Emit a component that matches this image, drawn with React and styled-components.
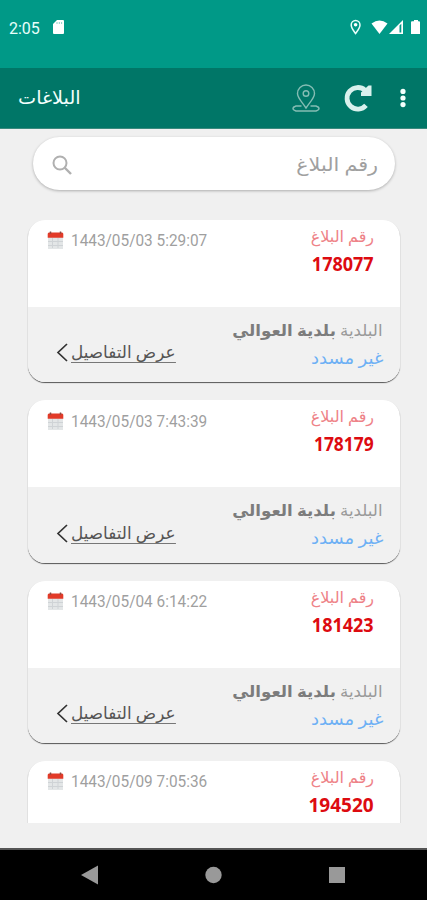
import React from 'react';
import styled, { createGlobalStyle } from 'styled-components';

const GlobalStyle = createGlobalStyle`
  * {
    box-sizing: border-box;
  }
  body {
    margin: 0;
    background: #f0f0f0;
    font-family: Roboto, 'DejaVu Sans', sans-serif;
  }
`;

const Screen = styled.div`
  width: 427px;
  height: 900px;
  display: flex;
  flex-direction: column;
  overflow: hidden;
  background: #f0f0f0;
`;

const StatusBar = styled.div`
  height: 68px;
  flex: none;
  display: flex;
  align-items: flex-start;
  padding: 19px 7px 0 9px;
  background: #009987;
  color: #e8fffb;
`;

const Clock = styled.span`
  font-size: 16px;
  line-height: 19px;
  width: 43px;
`;

const StatusIcons = styled.div`
  display: flex;
  margin-left: auto;
`;

const Toolbar = styled.div`
  height: 61px;
  flex: none;
  display: flex;
  align-items: center;
  padding: 0 21px 0 18px;
  background: #007667;
  border-bottom: 1px solid #398a7e;
`;

const Actions = styled.div`
  display: flex;
  align-items: center;
  margin-left: auto;

  svg + svg {
    margin-left: 24px;
  }
  svg:last-child {
    margin-left: 28px;
  }
`;

const Text = styled.span`
  display: inline-block;
  direction: rtl;
  white-space: nowrap;
  transform: scaleX(${props => props.$stretch || 1});
  transform-origin: ${props => props.$from || 'right'} center;
`;

const Title = styled(Text)`
  color: #f3fffc;
  font-size: 18px;
  line-height: 24px;
`;

const SearchBox = styled.div`
  height: 53px;
  flex: none;
  margin: 8px 32px 0 33px;
  padding: 3px 17px 0 19px;
  display: flex;
  align-items: center;
  justify-content: space-between;
  border-radius: 27px;
  background: #fff;
  box-shadow: 0 1px 3px rgba(0, 0, 0, 0.28);
`;

const Placeholder = styled(Text)`
  color: #a0a0a0;
  font-size: 19px;
  line-height: 26px;
`;

const List = styled.div`
  height: 604px;
  flex: none;
  margin-top: 29px;
  padding: 0.8px 27px 0 28px;
  display: flex;
  flex-direction: column;
  gap: 18px;
  overflow: hidden;
`;

const Card = styled.div`
  height: 162.4px;
  flex: none;
  border-radius: 17px;
  overflow: hidden;
  background: #fff;
  box-shadow: 0 1px 1px rgba(0, 0, 0, 0.65);
`;

const CardTop = styled.div`
  height: 87px;
  display: flex;
  justify-content: space-between;
  padding: 7px 26px 0 19px;
`;

const DateRow = styled.div`
  display: flex;
  align-items: center;
  height: 28px;
  gap: 7px;
  color: #9f9f9f;
  font-size: 16px;
`;

const DateText = styled(Text)`
  direction: ltr;
`;

const ReportId = styled.div`
  display: flex;
  flex-direction: column;
  align-items: flex-end;
`;

const Label = styled(Text)`
  color: #ee8287;
  font-size: 16px;
  line-height: 20px;
`;

const Number = styled(Text)`
  color: #dd0b10;
  font-family: 'Noto Sans', sans-serif;
  font-size: 20px;
  font-weight: 700;
  line-height: 28px;
  margin-top: 3px;
`;

const CardBottom = styled.div`
  height: 75.4px;
  display: flex;
  justify-content: space-between;
  padding: 10px 17px 0 28px;
  background: #f1f1f1;
`;

const Details = styled.div`
  display: flex;
  align-items: center;
  height: 26px;
  margin-top: 23px;
  gap: 3px;
  color: #555;
`;

const DetailsLink = styled(Text)`
  font-size: 17px;
  line-height: 20px;
  border-bottom: 1px solid #777;
`;

const Info = styled.div`
  display: flex;
  flex-direction: column;
  align-items: flex-end;
`;

const Municipality = styled(Text)`
  color: #999;
  font-size: 16px;
  line-height: 28px;
  b {
    color: #7c7c7c;
  }
`;

const Status = styled(Text)`
  color: #6db0f5;
  font-size: 17px;
  line-height: 26px;
`;

const NavBar = styled.div`
  height: 52px;
  flex: none;
  margin-top: auto;
  display: flex;
  justify-content: space-between;
  align-items: center;
  padding: 0 81px;
  background: #000;
  border-top: 2px solid #555;
`;

const reports = [
  { id: '178077', date: '1443/05/03 5:29:07' },
  { id: '178179', date: '1443/05/03 7:43:39', stretch: 0.87 },
  { id: '181423', date: '1443/05/04 6:14:22' },
  { id: '194520', date: '1443/05/09 7:05:36', stretch: 0.95, collapsed: true }
];

const SdIcon = () => (
  <svg width="13" height="16" viewBox="0 0 13 16">
    <path d="M5 1h6q1 0 1 1v12q0 1-1 1H2q-1 0-1-1V5z" fill="#fff" />
    <path d="M5 3v2M7.3 3v2M9.6 3v2" stroke="#8fd0c7" />
  </svg>
);

const StatusGlyphs = () => (
  <svg width="72" height="17" viewBox="0 0 72 17" fill="#fff">
    <path
      d="M7.5 14.5C5 11 3.2 8.8 3.2 6a4.4 4.4 0 0 1 8.8 0c0 2.8-2 5-4.5 8.5z"
      fill="none"
      stroke="#e8fffb"
      strokeWidth="1.5"
    />
    <circle cx="7.6" cy="5.8" r="1.8" />
    <path d="M23.5 4.5Q31.5-1.5 39.5 4.5L31.5 15z" />
    <path d="M41 15L55 1v14z" />
    <path d="M51.5 6.5v7h1.8V4.7z" fill="#009987" />
    <path d="M64 2.2h2V1h4v1.2h1q1 0 1 1V15h-9V3.2q0-1 1-1z" />
  </svg>
);

const MapPin = () => (
  <svg width="28" height="29" viewBox="0 0 28 29" fill="none" stroke="#84bdb4" strokeWidth="1.4">
    <path d="M14 24C10 18 5.5 14 5.5 9.5a8.5 8.5 0 0 1 17 0C22.5 14 18 18 14 24z" />
    <circle cx="14" cy="9.5" r="2.8" />
    <path d="M9.5 22H4q-3 1-3 2.5T4 27h20q3-1 3-2.5T24 22h-5.5" />
  </svg>
);

const Reload = () => (
  <svg width="28" height="28" viewBox="0 0 28 28">
    <path
      d="M22 21.4A10.8 10.8 0 1 1 21 6.2"
      fill="none"
      stroke="#d9f1ed"
      strokeWidth="4.8"
    />
    <path d="M27.5 1.5V12H17V8.500L24.5 1.5z" fill="#d9f1ed" />
  </svg>
);

const Dots = () => (
  <svg width="6" height="20" viewBox="0 0 6 20" fill="#f3fffc">
    <circle cx="3" cy="3.4" r="2.6" />
    <circle cx="3" cy="10" r="2.6" />
    <circle cx="3" cy="16.6" r="2.6" />
  </svg>
);

const SearchIcon = () => (
  <svg width="21" height="21" viewBox="0 0 21 21" fill="none" stroke="#b0b0b0" strokeWidth="2">
    <circle cx="8" cy="8" r="6.5" />
    <path d="M12.5 12.5l6.5 6.5" strokeWidth="2.4" />
  </svg>
);

const CalendarIcon = () => (
  <svg width="17" height="19" viewBox="0 0 17 19">
    <path d="M1 6h15v12H1z" fill="#e3e6e7" />
    <path d="M1 10.5h15M1 14.5h15M5.5 7v10M11 7v10" stroke="#cfd3d6" />
    <path d="M2 1.5h13q1.3 0 1.3 1.5v3.8H.7V3Q.7 1.5 2 1.5z" fill="#e23a28" />
    <path d="M3.5.5v2.3M13.5.5v2.3" stroke="#8c4a43" strokeWidth="1.5" />
  </svg>
);

const Chevron = () => (
  <svg width="12" height="19" viewBox="0 0 12 19">
    <path d="M11 1L2 9.5 11 18" fill="none" stroke="#333" strokeWidth="1.7" />
  </svg>
);

const Report = ({ id, date, stretch = 0.9, collapsed }) => (
  <Card>
    <CardTop>
      <DateRow>
        <CalendarIcon />
        <DateText $from="left" $stretch={0.96}>
          {date}
        </DateText>
      </DateRow>
      <ReportId>
        <Label>رقم البلاغ</Label>
        <Number $stretch={stretch}>{id}</Number>
      </ReportId>
    </CardTop>
    {!collapsed && (
      <CardBottom>
        <Details>
          <Chevron />
          <DetailsLink $from="left" $stretch={0.99}>
            عرض التفاصيل
          </DetailsLink>
        </Details>
        <Info>
          <Municipality $stretch={1.04}>
            البلدية <b>بلدية العوالي</b>
          </Municipality>
          <Status $stretch={1.06}>غير مسدد</Status>
        </Info>
      </CardBottom>
    )}
  </Card>
);

const App = () => (
  <Screen>
    <GlobalStyle />
    <StatusBar>
      <Clock>2:05</Clock>
      <SdIcon />
      <StatusIcons>
        <StatusGlyphs />
      </StatusIcons>
    </StatusBar>
    <Toolbar>
      <Title $from="left" $stretch={1.07}>
        البلاغات
      </Title>
      <Actions>
        <MapPin />
        <Reload />
        <Dots />
      </Actions>
    </Toolbar>
    <SearchBox>
      <SearchIcon />
      <Placeholder $stretch={1.09}>رقم البلاغ</Placeholder>
    </SearchBox>
    <List>
      {reports.map(report => (
        <Report key={report.id} {...report} />
      ))}
    </List>
    <NavBar>
      <svg width="17" height="20" viewBox="0 0 17 20">
        <path d="M0 10L17 .5v19z" fill="#999" />
      </svg>
      <svg width="17" height="18" viewBox="0 0 17 18">
        <circle cx="8.5" cy="9" r="8.2" fill="#999" />
      </svg>
      <svg width="18" height="18" viewBox="0 0 18 18">
        <path d="M1 1h16v16H1z" fill="#999" />
      </svg>
    </NavBar>
  </Screen>
);

export default App;
